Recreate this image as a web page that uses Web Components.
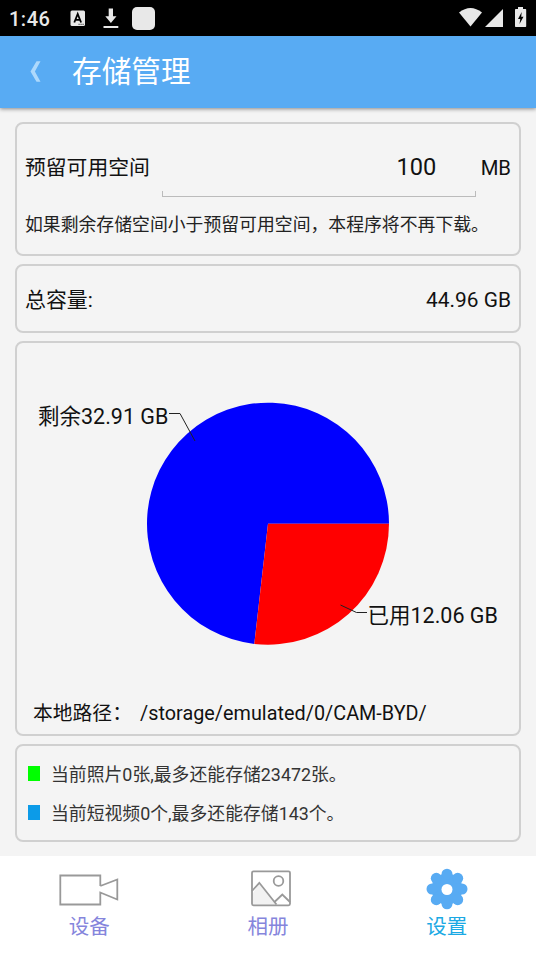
<!DOCTYPE html>
<html lang="zh-CN">
<head>
<meta charset="utf-8">
<title>存储管理</title>
<style>
html,body{margin:0;height:100%}
body{font-family:Roboto,"Noto Sans CJK SC",sans-serif;background:#f4f4f4;overflow:hidden}
</style>
</head>
<body>
<storage-app></storage-app>
<script>
const define = (name, html) => {
  const t = document.createElement('template');
  t.innerHTML = html;
  customElements.define(name, class extends HTMLElement {
    constructor() {
      super();
      this.attachShadow({ mode: 'open' }).append(t.content.cloneNode(true));
    }
  });
};

define('status-bar', `<style>
:host{display:flex;height:36px;background:#000;color:#e8e8e8;align-items:center;box-sizing:border-box;padding-left:9px;flex:none}
span{font-size:20px;line-height:36px;width:61px;letter-spacing:.5px;font-weight:500;padding-top:1px;height:35px}
svg{display:block;flex:none}
.right{margin-left:auto}
</style>
<span>1:46</span>
<svg width="90" height="36" viewBox="70 0 90 36" fill="#e8e8e8">
<rect x="70.500" y="10.500" width="14.500" height="15.500" rx="1.500"/>
<path d="M74.300 22.500L77.700 14L81.100 22.500M75.600 19.800H79.800" fill="none" stroke="#000" stroke-width="1.800"/>
<path d="M78.500 24.300H84" stroke="#000" stroke-width=".8" stroke-dasharray="1.200 .8"/>
<path d="M108.700 8.500H113V16.300H116.500L110.900 23L105.300 16.300H108.700ZM103.500 26H118.300V28H103.500Z"/>
<rect x="132" y="7" width="23" height="23" rx="5"/>
</svg>
<svg class="right" width="80" height="36" viewBox="456 0 80 36" fill="#e8e8e8">
<path d="M459 12.500Q470.500 3.500 482 12.500L470.500 26.500Z"/>
<path d="M503 9V27H485Z"/>
<path d="M518 7H523V9H525.500Q526.200 9 526.200 9.700V26.300Q526.200 27 525.500 27H515.700Q515 27 515 26.300V9.700Q515 9 515.700 9H518Z"/>
<path d="M521.700 12L518 19H520.300L519.500 24L523.500 16.800H521.200Z" fill="#000"/>
</svg>`);

define('title-bar', `<style>
:host{display:flex;height:72px;background:#58abf3;color:#fff;align-items:center;flex:none;box-shadow:0 1px 4px rgba(0,0,0,.45);z-index:1}
svg{display:block;margin-right:16px}
h1{margin:0;font-size:29.700px;line-height:72px;font-weight:400}
</style>
<svg width="56" height="72" viewBox="0 36 56 72"><path d="M36.500 61.300H40.500L34.900 71.500L40.500 81.700H36.500L30.500 71.500Z" fill="#add9fc"/></svg>
<h1><slot></slot></h1>`);

define('info-card', `<style>
:host{display:flex;flex-direction:column;box-sizing:border-box;border:2px solid #d0d0d0;border-radius:8px;background:#f4f4f4;flex:none}
</style><slot></slot>`);

define('reserve-field', `<style>
:host{display:block;padding:0 8px;color:#111}
.row{display:flex;height:75px;font-size:20.800px;line-height:88px}
.input{width:314px;box-sizing:border-box;margin-left:12.500px;height:73px;padding-right:40px;text-align:right;font-size:23.600px;line-height:86px;background:
 linear-gradient(#bbb,#bbb) 0 100%/100% 1px no-repeat,
 linear-gradient(#bbb,#bbb) 0 100%/1px 6px no-repeat,
 linear-gradient(#bbb,#bbb) 100% 100%/1px 6px no-repeat}
.unit{margin-left:auto;font-size:20.300px}
.label{white-space:nowrap}
p{margin:0;font-size:17.850px;line-height:52px;white-space:nowrap;color:#222}
</style>
<div class="row"><span class="label">预留可用空间</span><div class="input">100</div><span class="unit">MB</span></div>
<p>如果剩余存储空间小于预留可用空间，本程序将不再下载。</p>`);

define('total-row', `<style>
:host{display:flex;justify-content:space-between;padding:0 8px;font-size:20.900px;line-height:68px;color:#111}
</style><span><slot name="label"></slot></span><span><slot></slot></span>`);

define('usage-chart', `<style>
:host{display:block}
svg{display:block}
text{font-size:21.500px;fill:#111}
</style>
<svg width="502" height="351" viewBox="17 343 502 351">
<path d="M268 523.700H389A121 121 0 1 0 254.300 643.900Z" fill="#00f"/>
<path d="M268 523.700H389A121 121 0 0 1 254.300 643.900Z" fill="#f00"/>
<path d="M169 413.500H180L195 441M340.500 605L356.500 612.500H367" fill="none" stroke="#222" stroke-width="1"/>
<text x="38" y="424">剩余32.91 GB</text>
<text x="367.500" y="623">已用12.06 GB</text>
</svg>`);

define('path-row', `<style>
:host{display:flex;padding-left:16px;font-size:19.800px;line-height:40px;color:#111;white-space:nowrap}
.label{width:107px}
.path{letter-spacing:.03px}
</style><span class="label">本地路径：</span><span class="path"><slot></slot></span>`);

define('legend-item', `<style>
:host{display:flex;align-items:center;height:39px;padding-left:11px;font-size:17.850px;line-height:39px;color:#333;white-space:nowrap}
i{width:12px;height:15px;background:var(--swatch);margin-right:11px}
span{padding-top:2px}
</style><i></i><span><slot></slot></span>`);

define('nav-item', `<style>
:host{display:flex;flex-direction:column;align-items:center;flex:1;color:#8585dc;font-size:20.500px;line-height:34px}
::slotted(svg){display:block;height:54px;width:80px}
</style><slot name="icon"></slot><span><slot></slot></span>`);

define('storage-app', `<style>
:host{display:flex;flex-direction:column;width:536px;height:954px}
main{flex:1;display:flex;flex-direction:column;gap:8px;padding:14px 15px 0}
nav{display:flex;height:98px;background:#fff;flex:none}
.reserve{height:134px}.total{height:69px}.chart{height:395px}
.legend{height:98px;padding-top:8px}
.active{color:#1ba9e4}
</style>
<status-bar></status-bar>
<title-bar>存储管理</title-bar>
<main>
<info-card class="reserve"><reserve-field></reserve-field></info-card>
<info-card class="total"><total-row><span slot="label">总容量:</span>44.96 GB</total-row></info-card>
<info-card class="chart"><usage-chart></usage-chart><path-row>/storage/emulated/0/CAM-BYD/</path-row></info-card>
<info-card class="legend">
<legend-item style="--swatch:#0f0">当前照片0张,最多还能存储23472张。</legend-item>
<legend-item style="--swatch:#0c9be8">当前短视频0个,最多还能存储143个。</legend-item>
</info-card>
</main>
<nav>
<nav-item><svg slot="icon" viewBox="49 856 80 54" fill="none" stroke="#999" stroke-width="1.800"><path d="M100.300 886V875.500H60.300V904.500H100.300V892.500L117.300 899.500V879.500L100.300 886"/></svg>设备</nav-item>
<nav-item><svg slot="icon" viewBox="228 856 80 54" fill="none" stroke="#999" stroke-width="1.800"><path d="M252 895L259 883L276 905H252Z" fill="#f2f2f2" stroke="none"/><rect x="252" y="871.300" width="38" height="34" rx="1.500"/><path d="M252 891L259.300 882.800L276.500 904.500M274.500 902L282.300 894.500L290 902"/><circle cx="278.500" cy="881" r="4.800"/></svg>相册</nav-item>
<nav-item class="active"><svg slot="icon" viewBox="407 856 80 54" fill="#58abf3"><circle cx="447" cy="889" r="15.500"/><circle cx="447" cy="874.200" r="5.500"/><circle cx="457.700" cy="878.300" r="5.500"/><circle cx="462" cy="889" r="5.500"/><circle cx="457.700" cy="899.700" r="5.500"/><circle cx="447" cy="903.800" r="5.500"/><circle cx="436.300" cy="899.700" r="5.500"/><circle cx="432" cy="889" r="5.500"/><circle cx="436.300" cy="878.300" r="5.500"/><circle cx="447" cy="889.500" r="5.500" fill="#fff"/></svg>设置</nav-item>
</nav>`);
</script>
</body>
</html>
